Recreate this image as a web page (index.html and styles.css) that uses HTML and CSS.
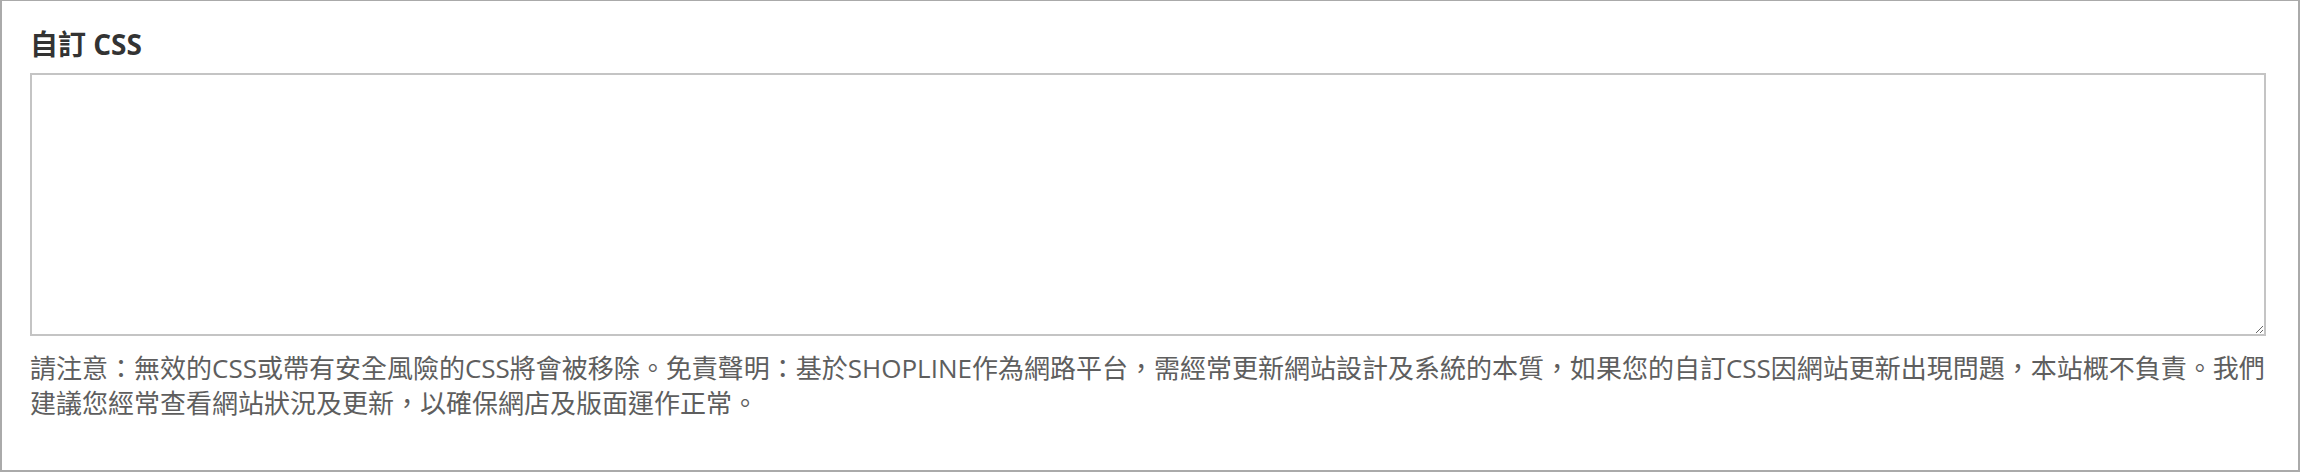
FILE: index.html
```html
<!DOCTYPE html>
<html lang="zh-Hant">
<head>
  <meta charset="UTF-8" />
  <meta name="viewport" content="width=device-width, initial-scale=1.0"/>
  <title>自訂 CSS</title>
  <link rel="stylesheet" href="styles.css">
</head>
<body>

  <div class="panel">
    <label class="field-title" for="custom-css">自訂 CSS</label>
    <textarea id="custom-css" class="css-input"></textarea>
    <p class="hint">請注意：無效的CSS或帶有安全風險的CSS將會被移除。免責聲明：基於SHOPLINE作為網路平台，需經常更新網站設計及系統的本質，如果您的自訂CSS因網站更新出現問題，本站概不負責。我們建議您經常查看網站狀況及更新，以確保網店及版面運作正常。</p>
  </div>

</body>
</html>
```

FILE: styles.css
```css
:root {
  --border: #aaaaaa;
  --input-border: #c4c4c4;
  --title: #333333;
  --hint: #5e5e5e;
}

* {
  box-sizing: border-box;
}

body {
  margin: 0;
  font-family: 'Open Sans', 'Noto Sans CJK TC', sans-serif;
  background: #ffffff;
}

.panel {
  width: 2300px;
  height: 472px;
  border: 2px solid var(--border);
  border-top-width: 1px;
  padding: 24px 32px 0 28px;
  display: flex;
  flex-direction: column;
}

.field-title {
  font-size: 28px;
  line-height: 38px;
  font-weight: bold;
  color: var(--title);
  margin-bottom: 10px;
}

.css-input {
  display: block;
  width: 100%;
  height: 263px;
  border: 2px solid var(--input-border);
  border-radius: 0;
  padding: 8px;
  font-family: 'Liberation Mono', monospace;
  font-size: 18px;
  outline: none;
}

.hint {
  margin: 15px 0 0;
  font-size: 26px;
  line-height: 35px;
  color: var(--hint);
}
```
